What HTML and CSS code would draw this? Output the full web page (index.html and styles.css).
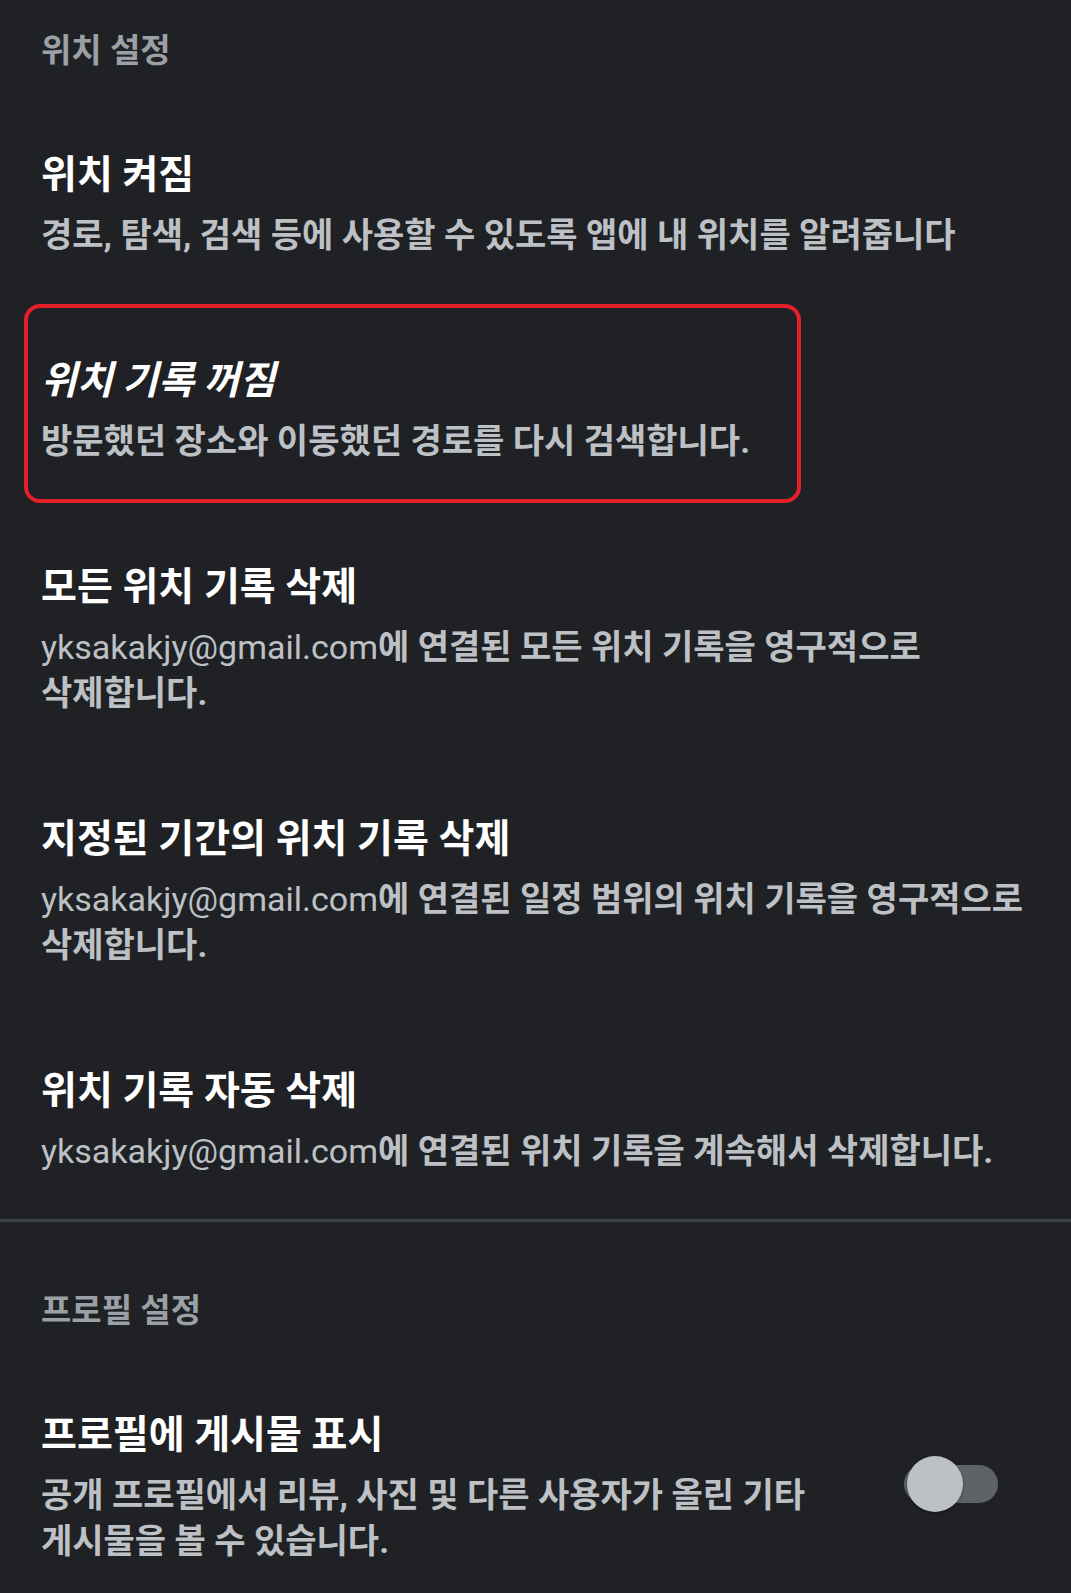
FILE: index.html
```html
<!DOCTYPE html>
<html lang="ko">
<head>
  <meta charset="UTF-8">
  <meta name="viewport" content="width=device-width, initial-scale=1.0">
  <title>위치 설정</title>
  <link rel="stylesheet" href="styles.css">
</head>
<body>

  <main class="settings">
    <section class="group">
      <h2 class="group-title">위치 설정</h2>

      <div class="item">
        <div class="item-text">
          <h3 class="item-title">위치 켜짐</h3>
          <p class="item-desc">경로, 탐색, 검색 등에 사용할 수 있도록 앱에 내 위치를 알려줍니다</p>
        </div>
      </div>

      <div class="item item-marked">
        <div class="item-text">
          <h3 class="item-title item-title-off">위치 기록 꺼짐</h3>
          <p class="item-desc">방문했던 장소와 이동했던 경로를 다시 검색합니다.</p>
        </div>
      </div>

      <div class="item">
        <div class="item-text">
          <h3 class="item-title">모든 위치 기록 삭제</h3>
          <p class="item-desc"><span class="email">yksakakjy@gmail.com</span>에 연결된 모든 위치 기록을 영구적으로 삭제합니다.</p>
        </div>
      </div>

      <div class="item">
        <div class="item-text">
          <h3 class="item-title">지정된 기간의 위치 기록 삭제</h3>
          <p class="item-desc"><span class="email">yksakakjy@gmail.com</span>에 연결된 일정 범위의 위치 기록을 영구적으로 삭제합니다.</p>
        </div>
      </div>

      <div class="item">
        <div class="item-text">
          <h3 class="item-title">위치 기록 자동 삭제</h3>
          <p class="item-desc"><span class="email">yksakakjy@gmail.com</span>에 연결된 위치 기록을 계속해서 삭제합니다.</p>
        </div>
      </div>
    </section>

    <section class="group">
      <h2 class="group-title">프로필 설정</h2>

      <div class="item">
        <div class="item-text">
          <h3 class="item-title">프로필에 게시물 표시</h3>
          <p class="item-desc">공개 프로필에서 리뷰, 사진 및 다른 사용자가 올린 기타 게시물을 볼 수 있습니다.</p>
        </div>
        <div class="switch">
          <span class="switch-thumb"></span>
        </div>
      </div>
    </section>
  </main>

</body>
</html>
```

FILE: styles.css
```css
body {
  margin: 0;
  background-color: #202124;
  font-family: Roboto, "Noto Sans CJK KR", sans-serif;
  word-break: keep-all;
}

.group {
  padding-top: 64px;
  border-top: 3px solid #3c4043;
}

.group:first-child {
  padding-top: 26px;
  border-top: 0;
}

.group:first-child .item:last-child {
  padding-bottom: 45px;
}

.group-title {
  margin: 0 0 25px;
  padding: 0 41px;
  font-size: 33px;
  line-height: 50px;
  font-weight: 700;
  color: #9aa0a6;
}

.item {
  position: relative;
  display: flex;
  align-items: center;
  padding: 49px 20px 49px 41px;
}

.item-text {
  flex: 1;
  min-width: 0;
}

.item-title {
  margin: 0 0 12px;
  font-size: 39px;
  line-height: 50px;
  font-weight: 700;
  color: #ffffff;
}

.item-title-off {
  font-style: italic;
}

.item-desc {
  margin: 0;
  font-size: 34px;
  line-height: 46px;
  font-weight: 700;
  color: #bdc1c6;
}

.item-desc .email {
  font-weight: 400;
}

/* red highlight drawn round the location history row */
.item-marked::after {
  content: "";
  position: absolute;
  left: 24px;
  top: -3px;
  width: 777px;
  height: 199px;
  box-sizing: border-box;
  border: 4px solid #e5202a;
  border-radius: 16px;
}

.switch {
  position: relative;
  flex: none;
  width: 94px;
  height: 38px;
  margin: 0 53px 6px 32px;
  border-radius: 19px;
  background-color: #5f6368;
}

.switch-thumb {
  position: absolute;
  left: 3px;
  top: -9px;
  width: 56px;
  height: 56px;
  border-radius: 50%;
  background-color: #bdc1c6;
  box-shadow: 0 1px 3px rgba(0, 0, 0, 0.4);
}
```
